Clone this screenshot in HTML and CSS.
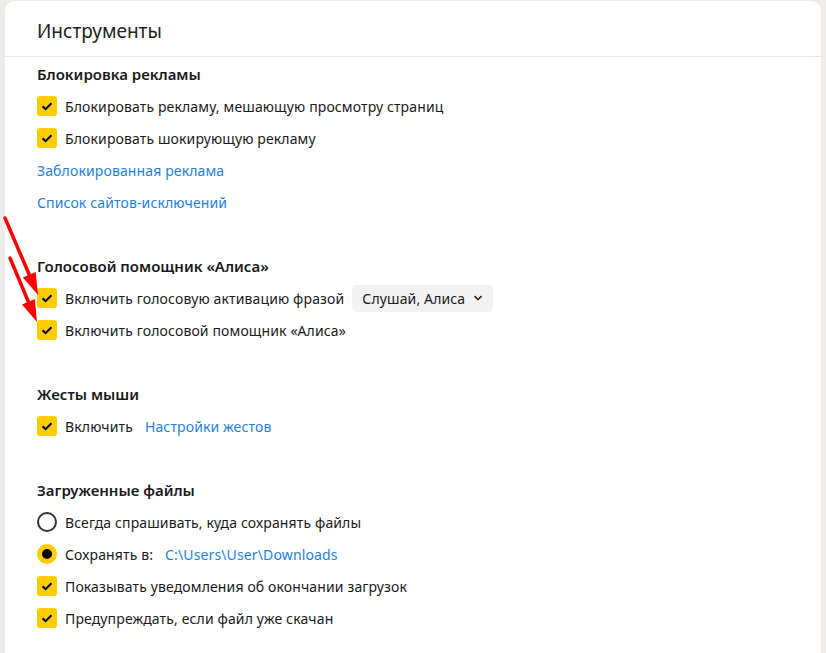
FILE: index.html
```html
<!DOCTYPE html>
<html lang="ru">
<head>
<meta charset="utf-8">
<link rel="stylesheet" href="styles.css">
</head>
<body>
<div class="card">
  <div class="card-head">Инструменты</div>
  <div class="card-body">
    <section class="section">
      <div class="heading">Блокировка рекламы</div>
      <div class="row"><span class="check"><svg viewBox="0 0 20 20"><path d="M5.5 10.2 L8.6 13.2 L14.5 7.2"/></svg></span><span>Блокировать рекламу, мешающую просмотру страниц</span></div>
      <div class="row"><span class="check"><svg viewBox="0 0 20 20"><path d="M5.5 10.2 L8.6 13.2 L14.5 7.2"/></svg></span><span>Блокировать шокирующую рекламу</span></div>
      <div class="row"><a class="link">Заблокированная реклама</a></div>
      <div class="row"><a class="link">Список сайтов-исключений</a></div>
    </section>
    <section class="section">
      <div class="heading">Голосовой помощник «Алиса»</div>
      <div class="row"><span class="check"><svg viewBox="0 0 20 20"><path d="M5.5 10.2 L8.6 13.2 L14.5 7.2"/></svg></span><span>Включить голосовую активацию фразой</span><span class="select">Слушай, Алиса<svg class="chev" viewBox="0 0 10 6"><path d="M1.5 1.2 L5 4.5 L8.5 1.2"/></svg></span></div>
      <div class="row"><span class="check"><svg viewBox="0 0 20 20"><path d="M5.5 10.2 L8.6 13.2 L14.5 7.2"/></svg></span><span>Включить голосовой помощник «Алиса»</span></div>
    </section>
    <section class="section">
      <div class="heading">Жесты мыши</div>
      <div class="row"><span class="check"><svg viewBox="0 0 20 20"><path d="M5.5 10.2 L8.6 13.2 L14.5 7.2"/></svg></span><span>Включить</span><a class="link after">Настройки жестов</a></div>
    </section>
    <section class="section last">
      <div class="heading">Загруженные файлы</div>
      <div class="row"><span class="radio"></span><span>Всегда спрашивать, куда сохранять файлы</span></div>
      <div class="row"><span class="radio on"></span><span>Сохранять в:</span><a class="link after">C:\Users\User\Downloads</a></div>
      <div class="row"><span class="check"><svg viewBox="0 0 20 20"><path d="M5.5 10.2 L8.6 13.2 L14.5 7.2"/></svg></span><span>Показывать уведомления об окончании загрузок</span></div>
      <div class="row"><span class="check"><svg viewBox="0 0 20 20"><path d="M5.5 10.2 L8.6 13.2 L14.5 7.2"/></svg></span><span>Предупреждать, если файл уже скачан</span></div>
    </section>
  </div>
</div>
<svg class="arrows" width="826" height="653" viewBox="0 0 826 653">
  <line x1="5" y1="218" x2="29.3" y2="274.8"/>
  <polygon points="38,295 22.9,277.6 35.7,272"/>
  <line x1="10" y1="258" x2="28.4" y2="301.7"/>
  <polygon points="37,322 22,304.4 34.8,299"/>
</svg>
</body>
</html>
```

FILE: styles.css
```css
html, body {
  margin: 0;
  padding: 0;
  height: 100%;
  overflow: hidden;
}
body {
  background: #efedeb;
  font-family: "Noto Sans", "Open Sans", sans-serif;
  font-size: 14px;
  color: #1a1a1a;
  position: relative;
}
.card {
  margin: 1px 0 0 5px;
  width: 816px;
  height: 652px;
  background: #fff;
  border-radius: 10px 10px 0 0;
}
.card-head {
  height: 55px;
  line-height: 60px;
  padding-left: 32px;
  font-size: 19px;
  color: #222;
  border-bottom: 1px solid #e6e6e6;
}
.card-body {
  padding: 1px 0 0 32px;
}
.section {
  margin-bottom: 32px;
}
.section.last {
  margin-bottom: 0;
}
.heading {
  height: 32px;
  display: flex;
  align-items: center;
  font-size: 15px;
  font-weight: 600;
  color: #1a1a1a;
}
.row {
  height: 32px;
  display: flex;
  align-items: center;
  letter-spacing: 0.13px;
}
.check {
  width: 20px;
  height: 20px;
  border-radius: 3px;
  background: #ffcc00;
  margin-right: 8px;
  flex: none;
}
.check svg {
  display: block;
  width: 20px;
  height: 20px;
  fill: none;
  stroke: #000;
  stroke-width: 2;
}
.radio {
  width: 20px;
  height: 20px;
  box-sizing: border-box;
  border: 2px solid #333;
  border-radius: 50%;
  margin-right: 8px;
  flex: none;
}
.radio.on {
  border: 5px solid #ffcc00;
  background: #000;
}
.link {
  color: #1f7fdb;
  cursor: pointer;
}
.link.after {
  margin-left: 12px;
}
.select {
  margin-left: 8px;
  height: 27px;
  padding: 0 10px;
  background: #f2f2f2;
  border-radius: 4px;
  display: flex;
  align-items: center;
}
.chev {
  width: 10px;
  height: 6px;
  margin-left: 8px;
  fill: none;
  stroke: #222;
  stroke-width: 1.6;
}
.arrows {
  position: absolute;
  left: 0;
  top: 0;
  pointer-events: none;
}
.arrows line {
  stroke: #f00;
  stroke-width: 3.5;
  stroke-linecap: round;
}
.arrows polygon {
  fill: #f00;
}
```
